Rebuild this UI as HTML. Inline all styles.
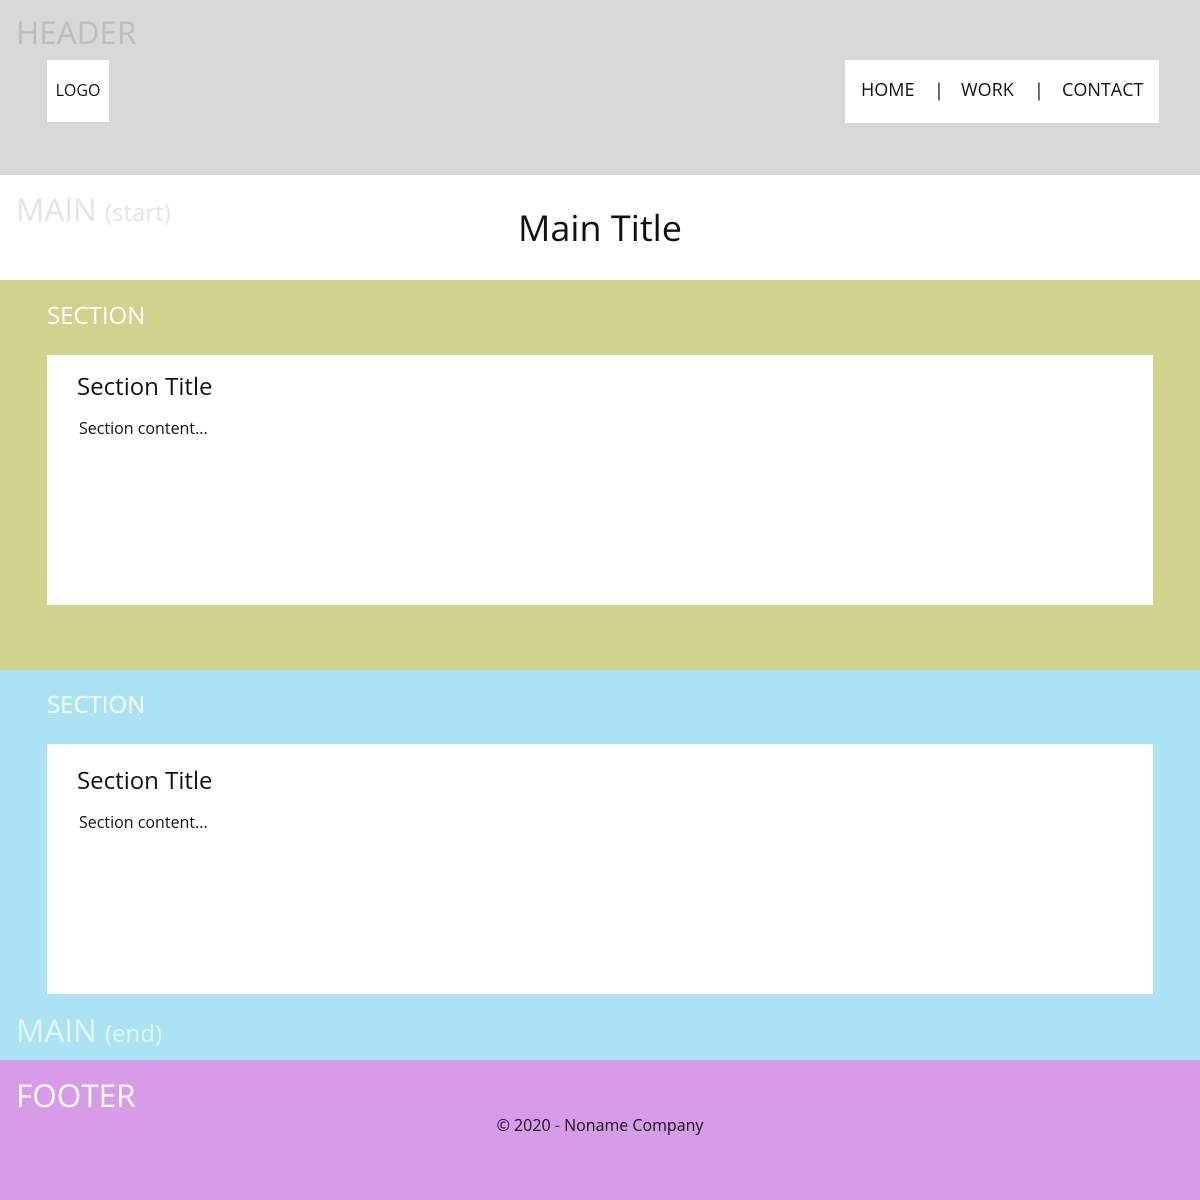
<!DOCTYPE html>
<html><head><meta charset="utf-8"><style>
*{margin:0;padding:0;box-sizing:border-box}
body{width:1200px;height:1200px;font-family:"Open Sans","DejaVu Sans","Liberation Sans",sans-serif;position:relative;overflow:hidden;background:#fff}
div,span{position:absolute;white-space:nowrap}
.lbl{line-height:1}
</style></head><body>
<div style="left:0;top:0;width:1200px;height:175px;background:#d8d8d8"></div>
<div class="lbl" style="left:16px;top:17px;font-size:31.5px;color:#bcbcbc">HEADER</div>
<div style="left:47px;top:60px;width:62px;height:62px;background:#fff;font-size:16px;line-height:61px;text-align:center;color:#111">LOGO</div>
<div style="left:845px;top:60px;width:314px;height:63px;background:#fff;font-size:18px;line-height:61px;color:#111">
<span style="left:16px">HOME</span><span style="left:89px">|</span><span style="left:116px">WORK</span><span style="left:189px">|</span><span style="left:217px">CONTACT</span></div>

<div class="lbl" style="left:16px;top:194px;font-size:31.5px;color:#e4e4e4">MAIN <span style="position:static;font-size:24px">(start)</span></div>
<div style="left:0;width:1200px;top:206px;text-align:center;font-size:36px;line-height:44px;color:#111">Main Title</div>

<div style="left:0;top:280px;width:1200px;height:390px;background:#d1d28e"></div>
<div class="lbl" style="left:47px;top:304px;font-size:24px;color:#fff">SECTION</div>
<div style="left:47px;top:355px;width:1106px;height:250px;background:#fff"></div>
<div class="lbl" style="left:77px;top:375px;font-size:24px;color:#111">Section Title</div>
<div class="lbl" style="left:79px;top:420px;font-size:16px;color:#111">Section content...</div>

<div style="left:0;top:670px;width:1200px;height:390px;background:#aae4f4"></div>
<div class="lbl" style="left:47px;top:693px;font-size:24px;color:#fff">SECTION</div>
<div style="left:47px;top:744px;width:1106px;height:250px;background:#fff"></div>
<div class="lbl" style="left:77px;top:769px;font-size:24px;color:#111">Section Title</div>
<div class="lbl" style="left:79px;top:814px;font-size:16px;color:#111">Section content...</div>
<div class="lbl" style="left:16px;top:1015px;font-size:31.5px;color:#e6f4f8">MAIN <span style="position:static;font-size:24px">(end)</span></div>

<div style="left:0;top:1060px;width:1200px;height:140px;background:#d89be8"></div>
<div class="lbl" style="left:16px;top:1080px;font-size:31.5px;color:#fff">FOOTER</div>
<div class="lbl" style="left:0;width:1200px;top:1117px;text-align:center;font-size:16px;color:#111">© 2020 - Noname Company</div>
</body></html>
